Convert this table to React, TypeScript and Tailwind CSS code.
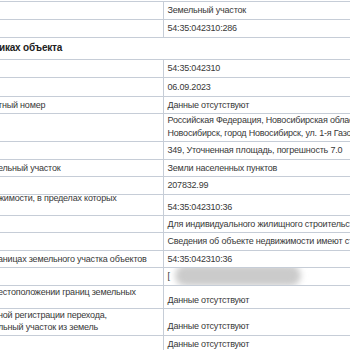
import React from "react";

type Row = {
  h: number;
  label?: string[];
  labelCls?: string;
  valueCls?: string;
  value: React.ReactNode;
};

const hCls: Record<number, string> = {
  17: "h-[17px]",
  18: "h-[18px]",
  19: "h-[19px]",
  21: "h-[21px]",
  23: "h-[23px]",
  27: "h-[27px]",
  28: "h-[28px]",
};

const rowsTop: Row[] = [
  { h: 18, value: "Земельный участок" },
  { h: 18, value: "54:35:042310:286" },
];

const rowsBottom: Row[] = [
  { h: 18, value: "54:35:042310" },
  { h: 19, value: "06.09.2023" },
  { h: 17, label: ["тный номер"], value: "Данные отсутствуют" },
  {
    h: 28,
    value: (
      <div className="leading-[13px]">
        Российская Федерация, Новосибирская область, городской округ
        <br />
        Новосибирск, город Новосибирск, ул. 1-я Газовая
      </div>
    ),
  },
  { h: 18, value: "349, Уточненная площадь, погрешность 7.0" },
  { h: 17, label: ["ельный участок"], value: "Земли населенных пунктов" },
  { h: 18, value: "207832.99" },
  {
    h: 21,
    label: ["жимости, в пределах которых"],
    labelCls: "pt-0 mt-[-3px]",
    valueCls: "align-bottom pb-[2px]",
    value: "54:35:042310:36",
  },
  { h: 17, value: "Для индивидуального жилищного строительства" },
  { h: 18, value: "Сведения об объекте недвижимости имеют статус" },
  { h: 17, label: ["аницах земельного участка объектов"], value: "54:35:042310:36" },
  {
    h: 18,
    value: (
      <div className="relative h-[12px]">
        <span>[</span>
        <div className="absolute left-[7px] top-[-5px] w-[126px] h-[21px] rounded-full bg-[#cbcbcb] blur-[3px]" />
      </div>
    ),
  },
  {
    h: 23,
    label: ["естоположении границ земельных"],
    labelCls: "pt-0",
    valueCls: "align-bottom pb-[2px]",
    value: "Данные отсутствуют",
  },
  {
    h: 27,
    label: ["ной регистрации перехода,", "льный участок из земель"],
    labelCls: "pt-0",
    valueCls: "align-bottom pb-[3px]",
    value: "Данные отсутствуют",
  },
  { h: 18, value: "Данные отсутствуют" },
];

function Rows({ rows }: { rows: Row[] }) {
  return (
    <>
      {rows.map((r, i) => (
        <tr key={i} className={hCls[r.h]}>
          <td className="w-[163px] border-y border-[#c6cdd7] p-0 align-top">
            <div
              className={
                "w-[163px] overflow-hidden whitespace-nowrap leading-[12px] " +
                (r.labelCls ?? "pt-[2px]")
              }
            >
              {r.label
                ? r.label.map((l, j) => (
                    <div key={j} className="ml-[-2px]">
                      {l}
                    </div>
                  ))
                : "\u00a0"}
            </div>
          </td>
          <td
            className={
              "border border-r-0 border-[#c6cdd7] pl-[4px] whitespace-nowrap overflow-hidden " +
              (r.valueCls ?? "align-middle py-0")
            }
          >
            {r.value}
          </td>
        </tr>
      ))}
    </>
  );
}

export default function App() {
  return (
    <div className="w-[350px] h-[350px] overflow-hidden bg-white font-['Liberation_Sans',Arial,sans-serif] text-[9px] tracking-[-0.2px] leading-[12px] text-[#383838]">
      <table className="w-[350px] table-fixed border-collapse">
        <colgroup>
          <col className="w-[163px]" />
          <col className="w-[187px]" />
        </colgroup>
        <tbody>
          <tr className="h-[1px]">
            <td colSpan={2} className="p-0" />
          </tr>
          <Rows rows={rowsTop} />
          <tr className="h-[22px]">
            <td colSpan={2} className="p-0 align-middle whitespace-nowrap overflow-hidden">
              <div className="ml-[-1px] text-[10px] font-bold text-[#222]">иках объекта</div>
            </td>
          </tr>
          <Rows rows={rowsBottom} />
        </tbody>
      </table>
    </div>
  );
}
